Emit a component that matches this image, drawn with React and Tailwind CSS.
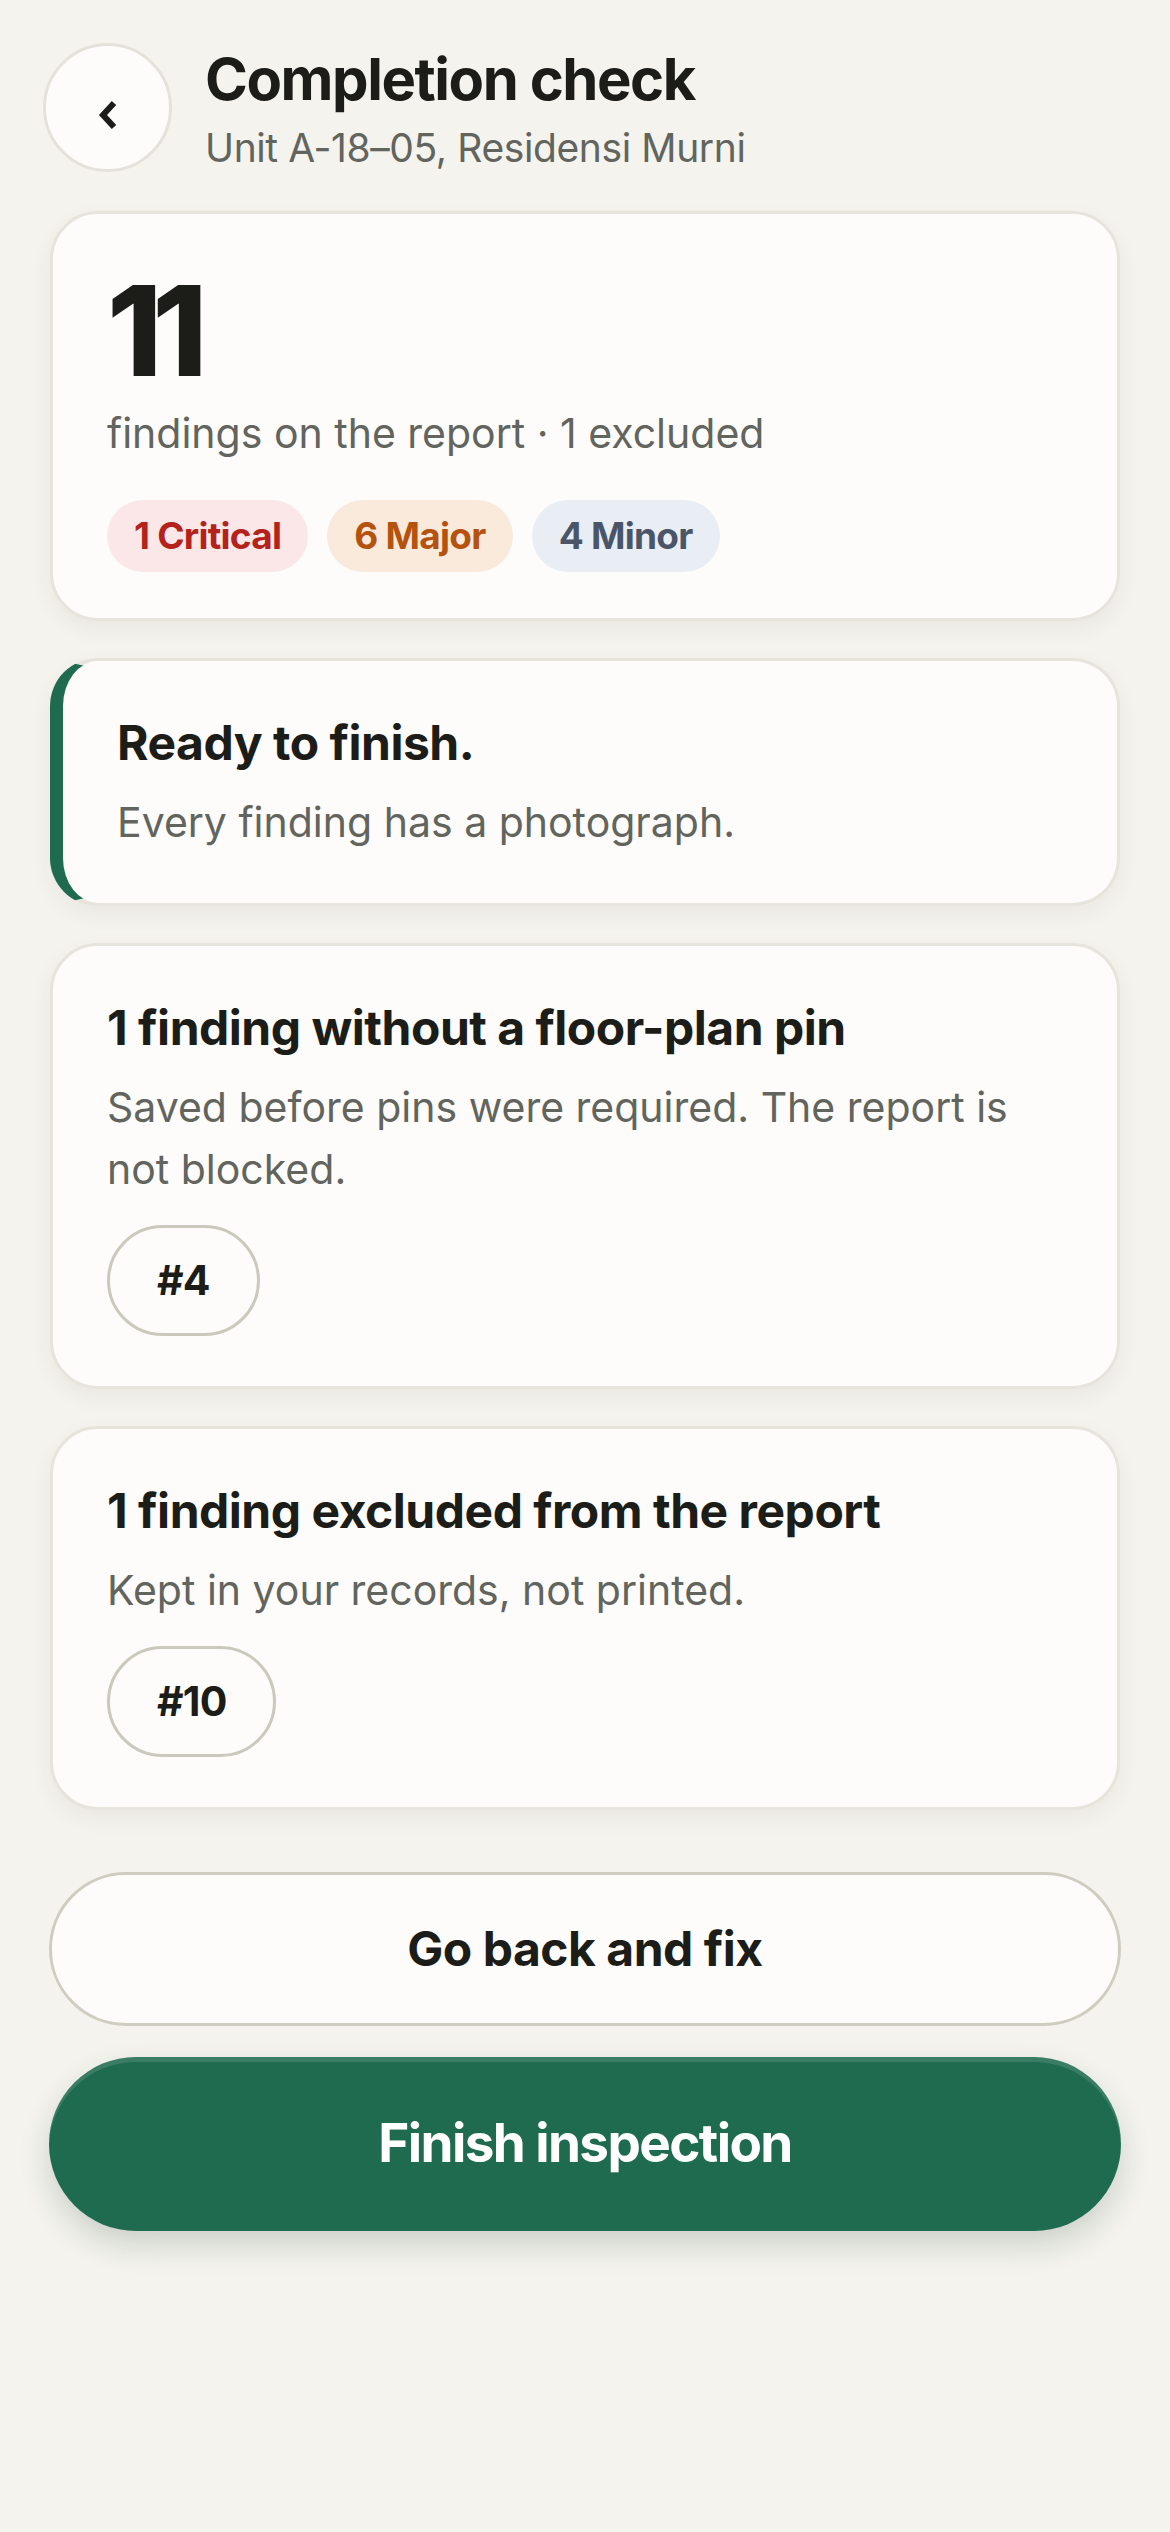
import React from "react";

const font = { fontFamily: "Inter, 'Noto Sans', sans-serif" };

function Chip({ label, cls }) {
  return (
    <span className={`flex h-[72px] items-center rounded-full px-[27px] text-[37px] font-bold tracking-[-0.02em] ${cls}`}>
      {label}
    </span>
  );
}

function IdPill({ label }) {
  return (
    <span className="mt-[25px] inline-flex h-[111px] items-center rounded-full border-[3px] border-[#cbc8bd] px-[47px] text-[41px] font-bold tracking-[-0.02em] text-[#1c1c19]">
      {label}
    </span>
  );
}

function Note({ title, body, id, ready }) {
  return (
    <div
      className={`rounded-[48px] border-[3px] border-[#e6e4dc] bg-[#fdfcfa] pb-[50px] pt-[52px] pr-[54px] shadow-[0_8px_22px_rgba(60,55,40,0.06)] ${
        ready ? "border-l-[13px] border-l-[#1f6b4f] pl-[54px]" : "pl-[54px]"
      }`}
    >
      <h2 className="text-[48px] font-bold leading-[60px] tracking-[-0.01em] text-[#1c1c19]">{title}</h2>
      <p className="mt-[18px] text-[41px] leading-[62px] text-[#62645e]">{body}</p>
      {id && <IdPill label={id} />}
    </div>
  );
}

export default function App() {
  return (
    <div style={font} className="min-h-[2532px] w-[1170px] bg-[#f4f3ee]">
      {/* header */}
      <div className="flex items-start gap-[33px] px-[43px] pt-[43px]">
        <button className="flex h-[129px] w-[129px] shrink-0 items-center justify-center rounded-full border-[3px] border-[#e4e2da] bg-[#fdfcfa]">
          <svg width="20" height="30" viewBox="0 0 20 30" className="mt-[14px]">
            <polyline points="16,3 5,15 16,27" fill="none" stroke="#1c1c19" strokeWidth="6" strokeLinejoin="miter" />
          </svg>
        </button>
        <div>
          <h1 className="text-[58px] font-bold leading-[72px] tracking-[-0.025em] text-[#1c1c19]">Completion check</h1>
          <p className="mt-[7px] text-[39px] leading-[52px] tracking-[-0.01em] text-[#62645e]">Unit A-18–05, Residensi Murni</p>
        </div>
      </div>

      <div className="flex flex-col gap-[37px] px-[50px] pt-[37px]">
        {/* summary */}
        <div className="rounded-[48px] border-[3px] border-[#e6e4dc] bg-[#fdfcfa] px-[54px] pb-[46px] pt-[54px] shadow-[0_8px_22px_rgba(60,55,40,0.06)]">
          <div className="text-[125px] font-extrabold leading-none tracking-[-0.08em] text-[#1c1c19]">11</div>
          <p className="mt-[10px] text-[41px] leading-[60px] text-[#62645e]">
            findings on the report · 1 excluded
          </p>
          <div className="mt-[37px] flex gap-[19px]">
            <Chip label="1 Critical" cls="bg-[#fbe7e7] text-[#b4231b]" />
            <Chip label="6 Major" cls="bg-[#f9eadc] text-[#b5520f]" />
            <Chip label="4 Minor" cls="bg-[#e8eef4] text-[#4a5568]" />
          </div>
        </div>

        <Note ready title="Ready to finish." body="Every finding has a photograph." />
        <Note
          title="1 finding without a floor-plan pin"
          body="Saved before pins were required. The report is not blocked."
          id="#4"
        />
        <Note title="1 finding excluded from the report" body="Kept in your records, not printed." id="#10" />
      </div>

      {/* actions */}
      <div className="flex flex-col gap-[31px] px-[49px] pt-[62px]">
        <button className="flex h-[154px] items-center justify-center rounded-full border-[3px] border-[#cfccc0] bg-[#fdfcfa] text-[48px] font-bold tracking-[-0.01em] text-[#1c1c19]">
          Go back and fix
        </button>
        <button className="flex h-[174px] items-center justify-center rounded-full bg-[#1f6b4f] text-[53px] font-bold tracking-[-0.03em] text-white shadow-[inset_0_5px_0_rgba(255,255,255,0.12),0_14px_30px_rgba(30,60,40,0.18)]">
          Finish inspection
        </button>
      </div>
    </div>
  );
}
